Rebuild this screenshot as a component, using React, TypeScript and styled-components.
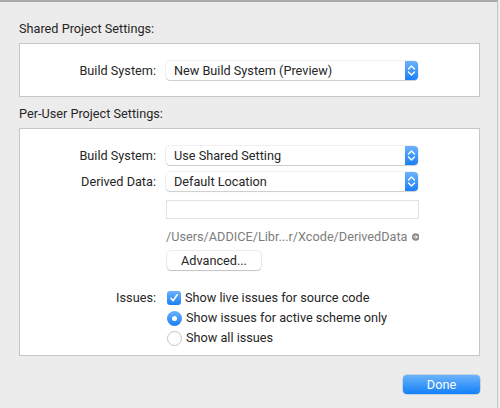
import React from "react";
import styled, { createGlobalStyle } from "styled-components";

const Global = createGlobalStyle`
  html, body { margin: 0; padding: 0; }
  body {
    background: #ececec;
    font-family: Roboto, "Liberation Sans", sans-serif;
    font-size: 12.7px;
    color: #262626;
  }
`;

const Window = styled.div`
  position: relative;
  width: 498px;
  height: 408px;
  box-sizing: border-box;
  background: #ececec;
  border-top: 2px solid #a9a9a9;
  border-right: 1px solid #c4c4c4;
  padding: 18px 19px 0 19px;
  display: flex;
  flex-direction: column;
`;

const SectionTitle = styled.div<{ $mt?: number }>`
  height: 17px;
  line-height: 17px;
  margin-top: ${(p) => p.$mt ?? 0}px;
  margin-bottom: 6px;
  white-space: nowrap;
`;

const Box = styled.div<{ $h: number; $pt: number }>`
  box-sizing: border-box;
  width: 461px;
  height: ${(p) => p.$h}px;
  background: #fff;
  border: 1px solid #c6c6c6;
  padding-top: ${(p) => p.$pt}px;
  display: grid;
  grid-template-columns: 136px 253px;
  column-gap: 10px;
  align-content: start;
`;

const Label = styled.div<{ $h?: number }>`
  text-align: right;
  height: ${(p) => p.$h ?? 19}px;
  line-height: ${(p) => p.$h ?? 19}px;
  white-space: nowrap;
`;

const Cell = styled.div<{ $mb?: number }>`
  margin-bottom: ${(p) => p.$mb ?? 0}px;
`;

const Popup = styled.div`
  box-sizing: border-box;
  width: 252px;
  height: 19px;
  border-radius: 4px;
  background: #fff;
  box-shadow: 0 0 0 0.5px rgba(0,0,0,0.12), 0 1px 1px rgba(0,0,0,0.15);
  padding-left: 8px;
  line-height: 19px;
  display: flex;
  justify-content: space-between;
  white-space: nowrap;
`;

const Stepper = styled.div`
  width: 13px;
  height: 19px;
  border-radius: 0 4px 4px 0;
  background: linear-gradient(#6bb2fb, #1b7ff6);
  display: flex;
  align-items: center;
  justify-content: center;
`;

const Field = styled.div`
  box-sizing: border-box;
  width: 253px;
  height: 19px;
  border: 1px solid #e2e2e2;
  background: #fff;
`;

const PathRow = styled.div`
  display: flex;
  align-items: center;
  gap: 4px;
  color: #7d7d7d;
  height: 17px;
  line-height: 17px;
  white-space: nowrap;
`;

const PushButton = styled.div`
  box-sizing: border-box;
  width: 94px;
  height: 19px;
  border-radius: 4px;
  background: #fff;
  box-shadow: 0 0 0 0.5px rgba(0,0,0,0.15), 0 1px 1px rgba(0,0,0,0.18);
  text-align: center;
  line-height: 19px;
  margin-left: 1px;
`;

const Option = styled.div`
  display: flex;
  align-items: center;
  gap: 4px;
  height: 20px;
  line-height: 20px;
  margin-left: 1px;
  white-space: nowrap;
`;

const CheckBox = styled.div`
  width: 14px;
  height: 14px;
  border-radius: 3px;
  background: linear-gradient(#6bb2fb, #1b7ff6);
  display: flex;
  align-items: center;
  justify-content: center;
`;

const Radio = styled.div<{ $on?: boolean }>`
  box-sizing: border-box;
  width: 15px;
  height: 15px;
  border-radius: 50%;
  background: ${(p) => (p.$on ? "linear-gradient(#6bb2fb, #1b7ff6)" : "#fff")};
  border: ${(p) => (p.$on ? "none" : "1px solid #c4c4c4")};
  display: flex;
  align-items: center;
  justify-content: center;
  &::after {
    content: "";
    display: ${(p) => (p.$on ? "block" : "none")};
    width: 5px;
    height: 5px;
    border-radius: 50%;
    background: #fff;
  }
`;

const Footer = styled.div`
  display: flex;
  justify-content: flex-end;
  width: 461px;
  margin-top: 19px;
`;

const DoneButton = styled.div`
  width: 77px;
  height: 19px;
  border-radius: 4px;
  background: linear-gradient(#6cb3fa, #1380f8);
  box-shadow: 0 0 0 0.5px rgba(0,60,160,0.3);
  color: #fff;
  text-align: center;
  line-height: 19px;
`;

const Chevrons = () => (
  <svg width="9" height="13" viewBox="0 0 9 13">
    <path d="M1.5 5 L4.5 2 L7.5 5 M1.5 8 L4.5 11 L7.5 8" fill="none" stroke="#fff" strokeWidth="1.4" strokeLinecap="round" strokeLinejoin="round" />
  </svg>
);

const PopupButton = ({ text }: { text: string }) => (
  <Popup>
    <span>{text}</span>
    <Stepper>
      <Chevrons />
    </Stepper>
  </Popup>
);

const Arrow = () => (
  <svg width="10" height="10" viewBox="0 0 10 10">
    <circle cx="5" cy="5" r="5" fill="#8a8a8a" />
    <path d="M2.5 5 H7 M5 3 L7 5 L5 7" fill="none" stroke="#fff" strokeWidth="1.3" strokeLinecap="round" strokeLinejoin="round" />
  </svg>
);

export default function App() {
  return (
    <>
      <Global />
      <Window>
        <SectionTitle>Shared Project Settings:</SectionTitle>
        <Box $h={54} $pt={17}>
          <Label>Build System:</Label>
          <Cell>
            <PopupButton text="New Build System (Preview)" />
          </Cell>
        </Box>
        <SectionTitle $mt={8}>Per-User Project Settings:</SectionTitle>
        <Box $h={228} $pt={17}>
          <Label>Build System:</Label>
          <Cell $mb={7}>
            <PopupButton text="Use Shared Setting" />
          </Cell>
          <Label>Derived Data:</Label>
          <Cell $mb={9}>
            <PopupButton text="Default Location" />
          </Cell>
          <div />
          <Cell $mb={9}>
            <Field />
          </Cell>
          <div />
          <Cell $mb={6}>
            <PathRow>
              <span>/Users/ADDICE/Libr...r/Xcode/DerivedData</span>
              <Arrow />
            </PathRow>
          </Cell>
          <div />
          <Cell $mb={18}>
            <PushButton>Advanced...</PushButton>
          </Cell>
          <Label $h={20}>Issues:</Label>
          <Cell>
            <Option>
              <CheckBox>
                <svg width="10" height="10" viewBox="0 0 10 10">
                  <path d="M2 5.3 L4.2 7.6 L8.2 1.8" fill="none" stroke="#fff" strokeWidth="1.6" strokeLinecap="round" strokeLinejoin="round" />
                </svg>
              </CheckBox>
              <span>Show live issues for source code</span>
            </Option>
          </Cell>
          <div />
          <Cell>
            <Option>
              <Radio $on />
              <span>Show issues for active scheme only</span>
            </Option>
          </Cell>
          <div />
          <Cell>
            <Option>
              <Radio />
              <span>Show all issues</span>
            </Option>
          </Cell>
        </Box>
        <Footer>
          <DoneButton>Done</DoneButton>
        </Footer>
      </Window>
    </>
  );
}
